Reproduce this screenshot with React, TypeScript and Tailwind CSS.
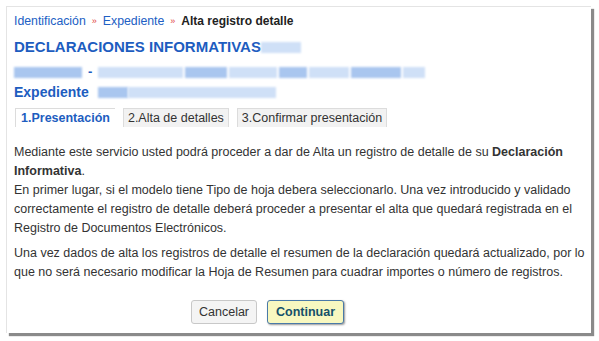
import React from "react";

function Blur({ w, tone = "mid" }: { w: number; tone?: "mid" | "light" | "dark" }) {
  const cls =
    tone === "dark"
      ? "bg-[#7fa8e6]"
      : tone === "light"
      ? "bg-[#cfe0f7]"
      : "bg-[#a9c6ef]";
  return <span className={`inline-block h-[11px] blur-[1px] ${cls}`} style={{ width: w }} />;
}

export default function App() {
  return (
    <div className="w-[599px] h-[341px] bg-white p-[6px] font-['Liberation_Sans',Arial,sans-serif]">
      <div className="w-[585px] h-[327px] bg-white border-l border-t border-[#e4e4e4] shadow-[3px_3px_1px_#8a8a8a] pl-[7px] pr-[2px] pt-[6px]">
        {/* breadcrumb */}
        <div className="flex items-center gap-[6px] text-[12.3px] leading-[16px]">
          <span className="text-[#2160c4]">Identificación</span>
          <span className="text-[#e04040] text-[9px]">»</span>
          <span className="text-[#2160c4]">Expediente</span>
          <span className="text-[#e04040] text-[9px]">»</span>
          <span className="font-bold text-[#222] text-[12px]">Alta registro detalle</span>
        </div>

        <div className="mt-[9px] flex items-center text-[15px] font-bold text-[#1d5dc0] leading-[18px]">
          <span>DECLARACIONES INFORMATIVAS</span>
          <Blur w={40} tone="light" />
        </div>

        <div className="mt-[9px] flex items-center gap-[2px] h-[14px]">
          <Blur w={68} />
          <span className="text-[#1d5dc0] font-bold text-[13px] px-[4px]">-</span>
          <Blur w={85} tone="light" />
          <Blur w={42} />
          <Blur w={48} tone="light" />
          <Blur w={28} />
          <Blur w={40} tone="light" />
          <Blur w={50} />
          <Blur w={22} tone="light" />
        </div>

        <div className="mt-[4px] flex items-center gap-[9px] text-[14px] font-bold text-[#1d5dc0] leading-[18px]">
          <span>Expediente</span>
          <div className="flex">
            <Blur w={30} />
            <Blur w={148} tone="light" />
          </div>
        </div>

        {/* steps */}
        <div className="mt-[7px] ml-[1px] flex gap-[8px] text-[12.5px] leading-[17px]">
          <div className="px-[5px] pt-[1px] border-l border-t border-[#dcdcdc] bg-white font-bold text-[#1d5dc0]">
            1.Presentación
          </div>
          <div className="px-[4px] pt-[1px] border-l border-t border-r border-[#dcdcdc] bg-[#f2f2f2] text-[#333]">
            2.Alta de detalles
          </div>
          <div className="px-[4px] pt-[1px] border-l border-t border-r border-[#dcdcdc] bg-[#f2f2f2] text-[#333]">
            3.Confirmar presentación
          </div>
        </div>

        {/* body */}
        <div className="mt-[16px] text-[12.5px] leading-[19px] text-[#333]">
          <p>
            Mediante este servicio usted podrá proceder a dar de Alta un registro de detalle de su{" "}
            <b>Declaración Informativa</b>.
            <br />
            En primer lugar, si el modelo tiene Tipo de hoja debera seleccionarlo. Una vez introducido y validado
            correctamente el registro de detalle deberá proceder a presentar el alta que quedará registrada en el
            Registro de Documentos Electrónicos.
          </p>
          <p className="mt-[6px]">
            Una vez dados de alta los registros de detalle el resumen de la declaración quedará actualizado, por lo
            que no será necesario modificar la Hoja de Resumen para cuadrar importes o número de registros.
          </p>
        </div>

        <div className="mt-[18px] flex gap-[10px] pl-[177px]">
          <button className="h-[24px] px-[7px] rounded-[3px] border border-[#c8c8c8] bg-[#f4f4f4] text-[12.5px] text-[#333]">
            Cancelar
          </button>
          <button className="h-[24px] px-[8px] rounded-[3px] border border-[#4a7aa8] bg-[#f8f8c0] text-[12.5px] font-bold text-[#14506a] shadow-[1px_1px_2px_#999]">
            Continuar
          </button>
        </div>
      </div>
    </div>
  );
}
